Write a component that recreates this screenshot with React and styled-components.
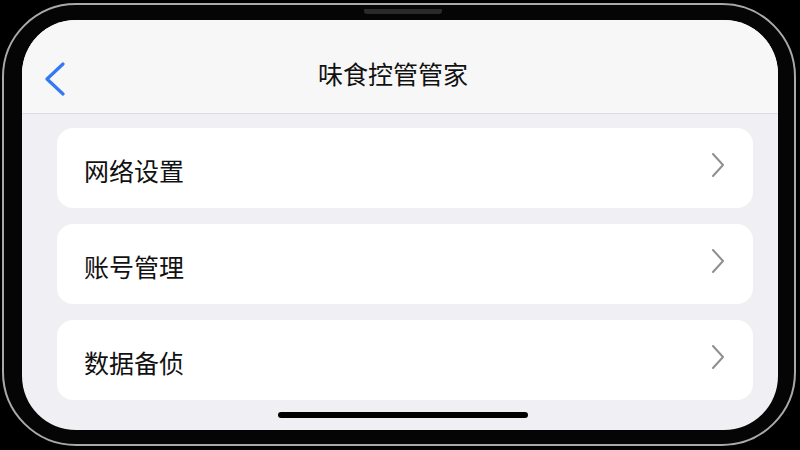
import React from "react";
import styled, { createGlobalStyle } from "styled-components";

const Global = createGlobalStyle`
  html, body {
    margin: 0;
    padding: 0;
    background: #000;
    width: 800px;
    height: 450px;
    overflow: hidden;
    font-family: "Noto Sans CJK SC", "Noto Sans", sans-serif;
  }
`;

const Frame = styled.div`
  position: relative;
  box-sizing: border-box;
  width: 794px;
  height: 443px;
  margin: 3px 0 0 2px;
  border: 2px solid #a9a9a9;
  border-radius: 74px;
  padding: 15px 16px 14px 18px;
  background: #050505;
  display: flex;
`;

const Speaker = styled.div`
  position: absolute;
  top: 4px;
  left: 360px;
  width: 78px;
  height: 5px;
  border-radius: 0 0 3px 3px;
  background: #2a2a2a;
`;

const Screen = styled.div`
  flex: 1;
  display: flex;
  flex-direction: column;
  border-radius: 54px;
  overflow: hidden;
  background: #efeff4;
`;

const Header = styled.div`
  height: 94px;
  box-sizing: border-box;
  flex-shrink: 0;
  padding: 24px 22px 0 22px;
  background: #f7f7f7;
  border-bottom: 1px solid #dcdce0;
  display: grid;
  grid-template-columns: 60px 1fr 60px;
  align-items: center;
`;

const Back = styled.button`
  background: none;
  border: none;
  padding: 0;
  display: flex;
  align-items: center;
  cursor: pointer;
`;

const Title = styled.div`
  text-align: center;
  font-size: 25px;
  color: #111;
  margin: -12px 14px 0 0;
`;

const List = styled.div`
  flex: 1;
  display: flex;
  flex-direction: column;
  gap: 16px;
  padding: 14px 25px 0 35px;
`;

const Row = styled.div`
  height: 80px;
  box-sizing: border-box;
  background: #fff;
  border-radius: 16px;
  display: flex;
  align-items: center;
  justify-content: space-between;
  padding: 0 28px 0 27px;
`;

const Label = styled.span`
  font-size: 25px;
  color: #111;
  margin-top: 4px;
`;

const HomeBar = styled.div`
  align-self: center;
  width: 250px;
  height: 6px;
  border-radius: 3px;
  background: #000;
  margin: 9px 0 12px 6px;
  flex-shrink: 0;
`;

const Chevron = () => (
  <svg width="14" height="26" viewBox="0 0 14 26" style={{ marginTop: -6 }}>
    <path d="M2 2 L12 13 L2 24" fill="none" stroke="#8e8e93" strokeWidth="2" strokeLinecap="round" strokeLinejoin="round" />
  </svg>
);

const items = ["网络设置", "账号管理", "数据备侦"];

const App = () => {
  return (
    <>
      <Global />
      <Frame>
        <Speaker />
        <Screen>
          <Header>
            <Back>
              <svg width="22" height="34" viewBox="0 0 22 34">
                <path d="M19 2 L3 17 L19 32" fill="none" stroke="#3478f6" strokeWidth="3.2" strokeLinecap="round" strokeLinejoin="round" />
              </svg>
            </Back>
            <Title>味食控管管家</Title>
            <div />
          </Header>
          <List>
            {items.map((t) => (
              <Row key={t}>
                <Label>{t}</Label>
                <Chevron />
              </Row>
            ))}
          </List>
          <HomeBar />
        </Screen>
      </Frame>
    </>
  );
};

export default App;
